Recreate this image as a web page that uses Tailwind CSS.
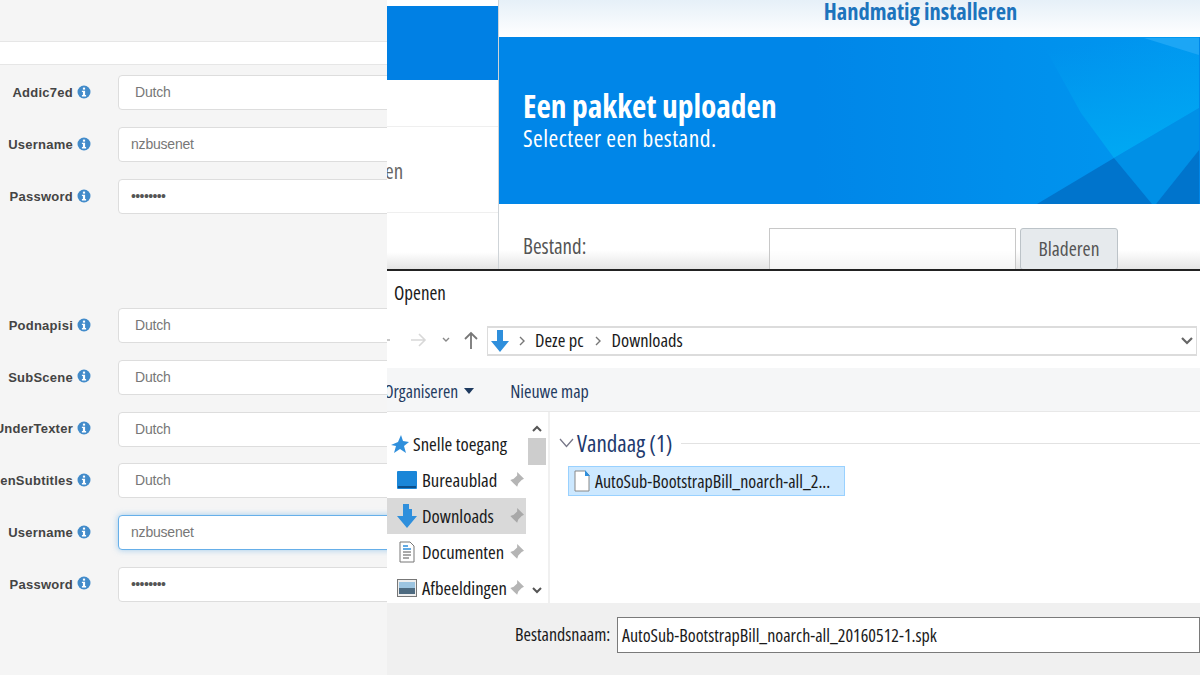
<!doctype html>
<html>
<head>
<meta charset="utf-8" />
<title>Handmatig installeren</title>
<script src="https://cdn.jsdelivr.net/npm/@tailwindcss/browser@4"></script>
</head>
<body class="m-0 bg-white">
<!-- three screen captures pasted together -->
<div class="flex w-[1200px] h-[675px] overflow-hidden font-['Open_Sans',sans-serif]">

  <!-- settings form -->
  <div class="w-[387px] shrink-0 h-full bg-[#f5f5f5] overflow-hidden font-['Liberation_Sans',sans-serif]">
    <div class="h-[42px] border-b border-[#e6e6e6]"></div>
    <div class="h-[23px] bg-white border-b border-[#e6e6e6]"></div>

    <div class="pt-[10px] flex flex-col gap-[17px]">
      <div class="flex items-center h-[35px]">
        <div class="w-[73px] shrink-0 flex justify-end text-[13px] font-bold text-[#444] tracking-[0.25px] whitespace-nowrap">Addic7ed</div>
        <svg class="w-[14px] h-[14px] ml-[4px] mr-[27px] -mt-[2px] shrink-0" viewBox="0 0 14 14"><circle cx="7" cy="7" r="6.5" fill="#428bca"/><rect x="5.9" y="2.6" width="2.2" height="2" fill="#fff"/><path d="M4.9 5.7h3.2v4.4h1v1.3H4.9v-1.3h1V7H4.9z" fill="#fff"/></svg>
        <div class="flex-1 h-[35px] flex items-center bg-white border border-[#ddd] rounded-l-[4px] pl-[16px] text-[14px] text-[#777] tracking-[-0.2px] -mr-[10px]">Dutch</div>
      </div>
      <div class="flex items-center h-[35px]">
        <div class="w-[73px] shrink-0 flex justify-end text-[13px] font-bold text-[#444] tracking-[0.25px] whitespace-nowrap">Username</div>
        <svg class="w-[14px] h-[14px] ml-[4px] mr-[27px] -mt-[2px] shrink-0" viewBox="0 0 14 14"><circle cx="7" cy="7" r="6.5" fill="#428bca"/><rect x="5.9" y="2.6" width="2.2" height="2" fill="#fff"/><path d="M4.9 5.7h3.2v4.4h1v1.3H4.9v-1.3h1V7H4.9z" fill="#fff"/></svg>
        <div class="flex-1 h-[35px] flex items-center bg-white border border-[#ddd] rounded-l-[4px] pl-[12px] text-[14px] text-[#777] tracking-[-0.2px] -mr-[10px]">nzbusenet</div>
      </div>
      <div class="flex items-center h-[35px]">
        <div class="w-[73px] shrink-0 flex justify-end text-[13px] font-bold text-[#444] tracking-[0.25px] whitespace-nowrap">Password</div>
        <svg class="w-[14px] h-[14px] ml-[4px] mr-[27px] -mt-[2px] shrink-0" viewBox="0 0 14 14"><circle cx="7" cy="7" r="6.5" fill="#428bca"/><rect x="5.9" y="2.6" width="2.2" height="2" fill="#fff"/><path d="M4.9 5.7h3.2v4.4h1v1.3H4.9v-1.3h1V7H4.9z" fill="#fff"/></svg>
        <div class="flex-1 h-[35px] flex items-center bg-white border border-[#ddd] rounded-l-[4px] pl-[12px] text-[14px] text-[#555] tracking-[-0.6px] -mr-[10px]">••••••••</div>
      </div>
    </div>

    <div class="mt-[94px] flex flex-col gap-[16.8px]">
      <div class="flex items-center h-[35px]">
        <div class="w-[73px] shrink-0 flex justify-end text-[13px] font-bold text-[#444] tracking-[0.25px] whitespace-nowrap">Podnapisi</div>
        <svg class="w-[14px] h-[14px] ml-[4px] mr-[27px] -mt-[2px] shrink-0" viewBox="0 0 14 14"><circle cx="7" cy="7" r="6.5" fill="#428bca"/><rect x="5.9" y="2.6" width="2.2" height="2" fill="#fff"/><path d="M4.9 5.7h3.2v4.4h1v1.3H4.9v-1.3h1V7H4.9z" fill="#fff"/></svg>
        <div class="flex-1 h-[35px] flex items-center bg-white border border-[#ddd] rounded-l-[4px] pl-[16px] text-[14px] text-[#777] tracking-[-0.2px] -mr-[10px]">Dutch</div>
      </div>
      <div class="flex items-center h-[35px]">
        <div class="w-[73px] shrink-0 flex justify-end text-[13px] font-bold text-[#444] tracking-[0.25px] whitespace-nowrap">SubScene</div>
        <svg class="w-[14px] h-[14px] ml-[4px] mr-[27px] -mt-[2px] shrink-0" viewBox="0 0 14 14"><circle cx="7" cy="7" r="6.5" fill="#428bca"/><rect x="5.9" y="2.6" width="2.2" height="2" fill="#fff"/><path d="M4.9 5.7h3.2v4.4h1v1.3H4.9v-1.3h1V7H4.9z" fill="#fff"/></svg>
        <div class="flex-1 h-[35px] flex items-center bg-white border border-[#ddd] rounded-l-[4px] pl-[16px] text-[14px] text-[#777] tracking-[-0.2px] -mr-[10px]">Dutch</div>
      </div>
      <div class="flex items-center h-[35px]">
        <div class="w-[73px] shrink-0 flex justify-end text-[13px] font-bold text-[#444] tracking-[0.25px] whitespace-nowrap">UnderTexter</div>
        <svg class="w-[14px] h-[14px] ml-[4px] mr-[27px] -mt-[2px] shrink-0" viewBox="0 0 14 14"><circle cx="7" cy="7" r="6.5" fill="#428bca"/><rect x="5.9" y="2.6" width="2.2" height="2" fill="#fff"/><path d="M4.9 5.7h3.2v4.4h1v1.3H4.9v-1.3h1V7H4.9z" fill="#fff"/></svg>
        <div class="flex-1 h-[35px] flex items-center bg-white border border-[#ddd] rounded-l-[4px] pl-[16px] text-[14px] text-[#777] tracking-[-0.2px] -mr-[10px]">Dutch</div>
      </div>
      <div class="flex items-center h-[35px]">
        <div class="w-[73px] shrink-0 flex justify-end text-[13px] font-bold text-[#444] tracking-[0.25px] whitespace-nowrap">OpenSubtitles</div>
        <svg class="w-[14px] h-[14px] ml-[4px] mr-[27px] -mt-[2px] shrink-0" viewBox="0 0 14 14"><circle cx="7" cy="7" r="6.5" fill="#428bca"/><rect x="5.9" y="2.6" width="2.2" height="2" fill="#fff"/><path d="M4.9 5.7h3.2v4.4h1v1.3H4.9v-1.3h1V7H4.9z" fill="#fff"/></svg>
        <div class="flex-1 h-[35px] flex items-center bg-white border border-[#ddd] rounded-l-[4px] pl-[16px] text-[14px] text-[#777] tracking-[-0.2px] -mr-[10px]">Dutch</div>
      </div>
      <div class="flex items-center h-[35px]">
        <div class="w-[73px] shrink-0 flex justify-end text-[13px] font-bold text-[#444] tracking-[0.25px] whitespace-nowrap">Username</div>
        <svg class="w-[14px] h-[14px] ml-[4px] mr-[27px] -mt-[2px] shrink-0" viewBox="0 0 14 14"><circle cx="7" cy="7" r="6.5" fill="#428bca"/><rect x="5.9" y="2.6" width="2.2" height="2" fill="#fff"/><path d="M4.9 5.7h3.2v4.4h1v1.3H4.9v-1.3h1V7H4.9z" fill="#fff"/></svg>
        <div class="flex-1 h-[35px] flex items-center bg-white border border-[#66afe9] shadow-[0_0_6px_rgba(102,175,233,0.6)] rounded-l-[4px] pl-[12px] text-[14px] text-[#777] tracking-[-0.2px] -mr-[10px]">nzbusenet</div>
      </div>
      <div class="flex items-center h-[35px]">
        <div class="w-[73px] shrink-0 flex justify-end text-[13px] font-bold text-[#444] tracking-[0.25px] whitespace-nowrap">Password</div>
        <svg class="w-[14px] h-[14px] ml-[4px] mr-[27px] -mt-[2px] shrink-0" viewBox="0 0 14 14"><circle cx="7" cy="7" r="6.5" fill="#428bca"/><rect x="5.9" y="2.6" width="2.2" height="2" fill="#fff"/><path d="M4.9 5.7h3.2v4.4h1v1.3H4.9v-1.3h1V7H4.9z" fill="#fff"/></svg>
        <div class="flex-1 h-[35px] flex items-center bg-white border border-[#ddd] rounded-l-[4px] pl-[12px] text-[14px] text-[#555] tracking-[-0.6px] -mr-[10px]">••••••••</div>
      </div>
    </div>
  </div>

  <div class="flex-1 min-w-0 flex flex-col [font-stretch:75%]">
    <!-- package center window -->
    <div class="h-[271px] shrink-0 flex border-b-2 border-[#222] overflow-hidden">
      <div class="w-[111px] shrink-0 bg-white flex flex-col">
        <div class="h-[6px]"></div>
        <div class="h-[74px] bg-[#0080e4]"></div>
        <div class="h-[47px] border-b border-[#efefef]"></div>
        <div class="h-[86px] flex items-center border-b border-[#efefef] text-[21px] text-[#666]"><span class="-ml-[2px] pt-[4px]">en</span></div>
        <div class="flex-1 bg-gradient-to-b from-white from-70% to-[#e4e4e4]"></div>
      </div>
      <div class="flex-1 min-w-0 flex flex-col border-l border-[#cfd4d8]">
        <div class="h-[37px] shrink-0 bg-gradient-to-b from-[#e6f0f8] to-white flex items-center justify-center pl-[142px]">
          <span class="text-[22.5px] font-bold text-[#1d74bd] pb-[13px]">Handmatig installeren</span>
        </div>
        <div class="relative h-[167px] shrink-0 bg-[#0086e8] overflow-hidden px-[24px] pt-[49px] text-white">
          <svg class="absolute inset-0" width="700" height="167" viewBox="0 0 700 167">
            <defs>
              <linearGradient id="base" x1="0" x2="1" y1="0" y2="0"><stop offset="0.45" stop-color="#0086e8"/><stop offset="1" stop-color="#0098f0"/></linearGradient>
              <linearGradient id="glow" x1="0.7" x2="0.85" y1="0" y2="1"><stop offset="0" stop-color="#00a8f2" stop-opacity="0"/><stop offset="1" stop-color="#00aaf3"/></linearGradient>
            </defs>
            <rect width="700" height="167" fill="url(#base)"/>
            <polygon points="540,0 700,0 700,71 615,121 582,76" fill="url(#glow)"/>
            <polygon points="645,1 700,1 700,18" fill="#1ca6f5"/>
            <polygon points="615,121 700,71 700,113 657,167 653,167" fill="#0090e6"/>
            <polygon points="538,167 615,121 653,167" fill="#0074cc"/>
            <polygon points="657,167 700,113 700,167" fill="#0074cc"/>
          </svg>
          <div class="relative text-[31.4px] font-bold leading-[40px]">Een pakket uploaden</div>
          <div class="relative text-[23.5px] tracking-[0.45px] leading-[30px] -mt-[3px]">Selecteer een bestand.</div>
        </div>
        <div class="flex-1 bg-gradient-to-b from-white from-70% to-[#e4e4e4] flex items-start pt-[24px] pl-[24px] text-[#555]">
          <div class="w-[246px] text-[21px] pt-[3px]">Bestand:</div>
          <div class="w-[247px] h-[42px] bg-white/60 border border-[#c8c8c8] shrink-0"></div>
          <div class="w-[98px] h-[42px] ml-[4px] bg-[#e6eaed] border border-[#bcc3c8] rounded-[3px] flex items-center justify-center text-[19.5px]">Bladeren</div>
        </div>
      </div>
    </div>

    <!-- windows open dialog -->
    <div class="flex-1 min-h-0 flex flex-col bg-white overflow-hidden text-[#1a1a1a]">
      <div class="h-[54px] shrink-0 flex items-center pl-[7px] text-[19px] pb-[10px]">Openen</div>
      <div class="h-[32px] shrink-0 flex items-center">
        <svg class="w-[100px] h-[32px] shrink-0" viewBox="0 0 100 32"><path d="M0 15h3" stroke="#bbb" stroke-width="1.6"/><path d="M24 15h14M32 9l6 6-6 6" fill="none" stroke="#d8d8d8" stroke-width="1.6"/><path d="M56 13l3 3 3-3" fill="none" stroke="#888" stroke-width="1.4"/><path d="M84 24V8M78 14l6-6 6 6" fill="none" stroke="#777" stroke-width="1.8"/></svg>
        <div class="flex-1 h-[30px] flex items-center border-y-2 border-x border-[#dcdcdc] mr-[3px] text-[18.5px]">
          <svg class="w-[20px] h-[24px] ml-[2px] shrink-0" viewBox="0 0 20 24"><path d="M7 1h6v11h6L10 23 1 12h6z" fill="#2f8fdc"/></svg>
          <svg class="w-[8px] h-[10px] ml-[8px] shrink-0" viewBox="0 0 8 10"><path d="M2 1l4 4-4 4" fill="none" stroke="#777" stroke-width="1.4"/></svg>
          <span class="ml-[9px] pb-[3px]">Deze pc</span>
          <svg class="w-[8px] h-[10px] ml-[10px] shrink-0" viewBox="0 0 8 10"><path d="M2 1l4 4-4 4" fill="none" stroke="#777" stroke-width="1.4"/></svg>
          <span class="ml-[10px] pb-[3px]">Downloads</span>
          <svg class="w-[14px] h-[10px] ml-auto mr-[2px] shrink-0" viewBox="0 0 14 10"><path d="M2 2l5 5 5-5" fill="none" stroke="#666" stroke-width="2.2"/></svg>
        </div>
      </div>
      <div class="h-[44px] mt-[11px] shrink-0 flex items-center bg-[#f5f6f7] border-b border-[#e8e8e8] text-[17.6px] text-[#1e3a5f] pt-[3px]">
        <span class="-ml-[3px]">Organiseren</span>
        <svg class="w-[10px] h-[6px] ml-[6px] shrink-0" viewBox="0 0 10 6"><path d="M0 0h10L5 6z" fill="#1e3a5f"/></svg>
        <span class="ml-[36px] text-[18px]">Nieuwe map</span>
      </div>
      <div class="flex-1 min-h-0 flex">
        <div class="w-[139px] shrink-0 flex flex-col pt-[14px] text-[18.7px] whitespace-nowrap overflow-hidden">
          <div class="h-[36px] shrink-0 flex items-center pl-[4px]">
            <svg class="w-[18px] h-[18px] shrink-0" viewBox="0 0 18 18"><path d="M10 0l2 6 6 1-5 4 2 7-6-4-6 4 2-7-5-1 7-3z" fill="#2f8fdc"/></svg>
            <span class="ml-[4px]">Snelle toegang</span>
          </div>
          <div class="h-[36px] shrink-0 flex items-center pl-[10px]">
            <svg class="w-[20px] h-[18px] shrink-0" viewBox="0 0 20 18"><rect width="20" height="18" rx="1" fill="#1a86d8"/><rect x="1" y="15" width="18" height="2" fill="#0c4f8a"/></svg>
            <span class="ml-[5px]">Bureaublad</span>
            <svg class="w-[16px] h-[16px] ml-auto mr-[2px] shrink-0" viewBox="0 0 14 14"><path d="M8 0l6 6-2 1-3 3-1 3-3-3-4 4 4-4-3-3 3-1 3-3z" fill="#b5b5b5"/></svg>
          </div>
          <div class="h-[36px] shrink-0 flex items-center pl-[10px] bg-[#d9d9d9]">
            <svg class="w-[20px] h-[24px] shrink-0" viewBox="0 0 20 24"><path d="M6 0h6v5h3v7h5L10 24 0 12h6z" fill="#2f8fdc"/></svg>
            <span class="ml-[5px]">Downloads</span>
            <svg class="w-[16px] h-[16px] ml-auto mr-[2px] shrink-0" viewBox="0 0 14 14"><path d="M8 0l6 6-2 1-3 3-1 3-3-3-4 4 4-4-3-3 3-1 3-3z" fill="#a8a8a8"/></svg>
          </div>
          <div class="h-[36px] shrink-0 flex items-center pl-[12px]">
            <svg class="w-[16px] h-[22px] shrink-0" viewBox="0 0 16 22"><path d="M1 1h10l4 4v16H1z" fill="#fff" stroke="#777"/><path d="M4 5h5M4 8h8" stroke="#2f8fdc" stroke-width="1.5"/><path d="M4 11h8M4 14h8M4 17h6" stroke="#555"/></svg>
            <span class="ml-[7px]">Documenten</span>
            <svg class="w-[16px] h-[16px] ml-auto mr-[2px] shrink-0" viewBox="0 0 14 14"><path d="M8 0l6 6-2 1-3 3-1 3-3-3-4 4 4-4-3-3 3-1 3-3z" fill="#b5b5b5"/></svg>
          </div>
          <div class="h-[36px] shrink-0 flex items-center pl-[10px]">
            <svg class="w-[20px] h-[18px] shrink-0" viewBox="0 0 20 18"><rect x="0.5" y="0.5" width="19" height="17" fill="#eee" stroke="#777"/><rect x="2" y="3" width="16" height="6" fill="#9cc4e0"/><rect x="2" y="9" width="16" height="6" fill="#4d6a80"/></svg>
            <span class="ml-[5px]">Afbeeldingen</span>
            <svg class="w-[16px] h-[16px] ml-auto mr-[2px] shrink-0" viewBox="0 0 14 14"><path d="M8 0l6 6-2 1-3 3-1 3-3-3-4 4 4-4-3-3 3-1 3-3z" fill="#b5b5b5"/></svg>
          </div>
        </div>
        <div class="w-[20px] ml-[1px] shrink-0 flex flex-col bg-white">
          <svg class="w-[20px] h-[18px] mt-[8px] shrink-0" viewBox="0 0 20 18"><path d="M6 11l4-4 4 4" fill="none" stroke="#555" stroke-width="2"/></svg>
          <div class="h-[27px] bg-[#cdcdcd] mx-[1px]"></div>
          <svg class="w-[20px] h-[18px] mt-auto mb-[4px] shrink-0" viewBox="0 0 20 18"><path d="M6 7l4 4 4-4" fill="none" stroke="#555" stroke-width="2"/></svg>
        </div>
        <div class="flex-1 min-w-0 border-l-2 border-[#f0f0f0] ml-[1px] pl-[18px] pt-[18px]">
          <div class="h-[26px] flex items-center text-[#1e3a6e]">
            <svg class="w-[15px] h-[10px] -ml-[9px] shrink-0" viewBox="0 0 15 10"><path d="M1 1l6.5 7.5L14 1" fill="none" stroke="#778" stroke-width="1.3"/></svg>
            <span class="ml-[3px] text-[23px]">Vandaag (1)</span>
            <div class="flex-1 h-[1px] bg-[#e2e2e2] ml-[9px]"></div>
          </div>
          <div class="mt-[10px] w-[277px] h-[30px] flex items-center bg-[#cce8ff] border border-[#99d1ff] text-[18px] pl-[5px]">
            <svg class="w-[16px] h-[22px] shrink-0" viewBox="0 0 16 22"><path d="M1 1h10l4 4v16H1z" fill="#fff" stroke="#888"/><path d="M11 0l5 6h-5z" fill="#2f8fdc"/></svg>
            <span class="ml-[5px] whitespace-nowrap">AutoSub-BootstrapBill_noarch-all_2...</span>
          </div>
        </div>
      </div>
      <div class="h-[72px] shrink-0 bg-[#f0f0f0] flex items-start pt-[14px] pl-[128px] text-[18px]">
        <span class="w-[102px] shrink-0 pt-[4px]">Bestandsnaam:</span>
        <div class="flex-1 h-[36px] bg-white border border-[#7a7a7a] flex items-center pl-[4px] whitespace-nowrap">AutoSub-BootstrapBill_noarch-all_20160512-1.spk</div>
      </div>
    </div>
  </div>
</div>
</body>
</html>
